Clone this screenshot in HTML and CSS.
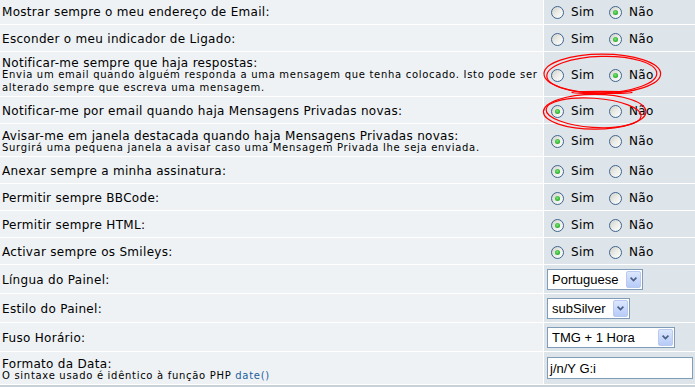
FILE: index.html
```html
<!DOCTYPE html>
<html lang="pt">
<head>
<meta charset="utf-8">
<title>Preferências</title>
<link rel="stylesheet" href="styles.css">
</head>
<body>
<div class="form">
  <div class="label"><span class="gen">Mostrar sempre o meu endereço de Email:</span></div>
  <div class="value radios"><span class="opt"><span class="radio"></span>Sim</span><span class="opt"><span class="radio on"></span>Não</span></div>

  <div class="label"><span class="gen">Esconder o meu indicador de Ligado:</span></div>
  <div class="value radios"><span class="opt"><span class="radio"></span>Sim</span><span class="opt"><span class="radio on"></span>Não</span></div>

  <div class="label"><span class="gen">Notificar-me sempre que haja respostas:</span><span class="small">Envia um email quando alguém responda a uma mensagem que tenha colocado. Isto pode ser<br>alterado sempre que escreva uma mensagem.</span></div>
  <div class="value radios"><span class="opt"><span class="radio"></span>Sim</span><span class="opt"><span class="radio on"></span>Não</span></div>

  <div class="label"><span class="gen">Notificar-me por email quando haja Mensagens Privadas novas:</span></div>
  <div class="value radios"><span class="opt"><span class="radio on"></span>Sim</span><span class="opt"><span class="radio"></span>Não</span></div>

  <div class="label"><span class="gen">Avisar-me em janela destacada quando haja Mensagens Privadas novas:</span><span class="small">Surgirá uma pequena janela a avisar caso uma Mensagem Privada lhe seja enviada.</span></div>
  <div class="value radios"><span class="opt"><span class="radio on"></span>Sim</span><span class="opt"><span class="radio"></span>Não</span></div>

  <div class="label"><span class="gen">Anexar sempre a minha assinatura:</span></div>
  <div class="value radios"><span class="opt"><span class="radio on"></span>Sim</span><span class="opt"><span class="radio"></span>Não</span></div>

  <div class="label"><span class="gen">Permitir sempre BBCode:</span></div>
  <div class="value radios"><span class="opt"><span class="radio on"></span>Sim</span><span class="opt"><span class="radio"></span>Não</span></div>

  <div class="label"><span class="gen">Permitir sempre HTML:</span></div>
  <div class="value radios"><span class="opt"><span class="radio on"></span>Sim</span><span class="opt"><span class="radio"></span>Não</span></div>

  <div class="label"><span class="gen">Activar sempre os Smileys:</span></div>
  <div class="value radios"><span class="opt"><span class="radio on"></span>Sim</span><span class="opt"><span class="radio"></span>Não</span></div>

  <div class="label"><span class="gen">Língua do Painel:</span></div>
  <div class="value fields"><div class="select w-lang"><span class="txt">Portuguese</span><span class="btn"><svg width="7" height="5" viewBox="0 0 7 5"><path d="M0.6 0.6 L3.5 3.5 L6.4 0.6" fill="none" stroke="#4a5f86" stroke-width="1.7"/></svg></span></div></div>

  <div class="label"><span class="gen">Estilo do Painel:</span></div>
  <div class="value fields"><div class="select w-style"><span class="txt">subSilver</span><span class="btn"><svg width="7" height="5" viewBox="0 0 7 5"><path d="M0.6 0.6 L3.5 3.5 L6.4 0.6" fill="none" stroke="#4a5f86" stroke-width="1.7"/></svg></span></div></div>

  <div class="label"><span class="gen">Fuso Horário:</span></div>
  <div class="value fields"><div class="select w-tz"><span class="txt">TMG + 1 Hora</span><span class="btn"><svg width="7" height="5" viewBox="0 0 7 5"><path d="M0.6 0.6 L3.5 3.5 L6.4 0.6" fill="none" stroke="#4a5f86" stroke-width="1.7"/></svg></span></div></div>

  <div class="label"><span class="gen">Formato da Data:</span><span class="small">O sintaxe usado é idêntico à função PHP <a class="link" href="#">date()</a></span></div>
  <div class="value fields"><div class="textbox">j/n/Y G:i</div></div>
</div>
<div class="foot"></div>

<svg class="marks" width="695" height="387" viewBox="0 0 695 387">
  <g fill="none" stroke="#ff0000" stroke-width="1.2">
    <ellipse cx="602.3" cy="73.8" rx="58.3" ry="19.6"/>
    <ellipse cx="601.8" cy="74.6" rx="55" ry="18.2" transform="rotate(-1.5 601.8 74.6)"/>
    <ellipse cx="602" cy="92.4" rx="30" ry="1" stroke-width="1.4"/>
    <ellipse cx="594.7" cy="111.8" rx="51.3" ry="17.4"/>
    <ellipse cx="593.6" cy="112.8" rx="47.6" ry="14.6" transform="rotate(4 593.6 112.8)"/>
  </g>
</svg>
</body>
</html>
```

FILE: styles.css
```css
html, body {
  margin: 0;
  padding: 0;
  background: #ffffff;
}

body {
  width: 695px;
  height: 387px;
  overflow: hidden;
  font-family: "DejaVu Sans", Verdana, sans-serif;
  color: #000000;
}

.form {
  display: grid;
  grid-template-columns: 543px 1fr;
  grid-template-rows: 26px 26px 44px 26px 32px 26px 26px 26px 26px 28px 28px 28px 32px;
  column-gap: 1px;
  row-gap: 1px;
  margin-top: -2px;
  background: #ffffff;
}

.label {
  display: flex;
  flex-direction: column;
  justify-content: center;
  padding: 2px 0 0 2px;
  background: #eef2f5;
}

.gen {
  font-size: 12px;
  line-height: 14px;
  letter-spacing: 0.3px;
  white-space: nowrap;
}

.small {
  font-size: 10px;
  line-height: 13px;
  letter-spacing: 0.7px;
  margin-top: -2px;
  white-space: nowrap;
}

.link {
  color: #1d5d9c;
  text-decoration: none;
}

.value {
  display: flex;
  align-items: center;
  background: #dde4ea;
}

.radios {
  padding: 2px 0 0 7px;
}

.fields {
  padding-left: 3px;
}

.opt {
  display: flex;
  align-items: center;
  font-size: 12px;
  line-height: 14px;
  letter-spacing: 0.3px;
}

.opt:first-child {
  width: 58px;
}

.radio {
  position: relative;
  width: 13px;
  height: 13px;
  box-sizing: border-box;
  margin-right: 7px;
  border: 1px solid #3f6590;
  border-radius: 50%;
  background: linear-gradient(135deg, #d2d2cc 0%, #ecece8 50%, #ffffff 100%);
}

.radio.on::after {
  content: "";
  position: absolute;
  left: 3px;
  top: 3px;
  width: 5px;
  height: 5px;
  border-radius: 50%;
  background: radial-gradient(circle at 45% 40%, #7be87b 0%, #35b835 55%, #1e961e 100%);
}

.select {
  display: flex;
  align-items: center;
  box-sizing: border-box;
  height: 21px;
  padding: 1px;
  border: 1px solid #7f9db9;
  background: #ffffff;
  font-family: "Liberation Sans", Arial, sans-serif;
  font-size: 13px;
  color: #000000;
}

.select .txt {
  flex: 1;
  padding-left: 3px;
  white-space: nowrap;
}

.select .btn {
  display: flex;
  align-items: center;
  justify-content: center;
  box-sizing: border-box;
  width: 15px;
  height: 17px;
  border: 1px solid #b9caf0;
  border-radius: 2px;
  background: linear-gradient(180deg, #dce7fd 0%, #c6d6fa 60%, #b6cbf7 100%);
}

.w-lang { width: 96px; }
.w-style { width: 83px; }
.w-tz { width: 128px; }

.textbox {
  display: flex;
  align-items: center;
  box-sizing: border-box;
  width: 146px;
  height: 22px;
  padding: 0 2px;
  border: 1px solid #7f9db9;
  background: #ffffff;
  font-family: "Liberation Sans", Arial, sans-serif;
  font-size: 13px;
  color: #000000;
}

.foot {
  height: 10px;
  margin-top: 1px;
  background: #c7d1d8;
}

.marks {
  position: absolute;
  left: 0;
  top: 0;
  pointer-events: none;
}
```
